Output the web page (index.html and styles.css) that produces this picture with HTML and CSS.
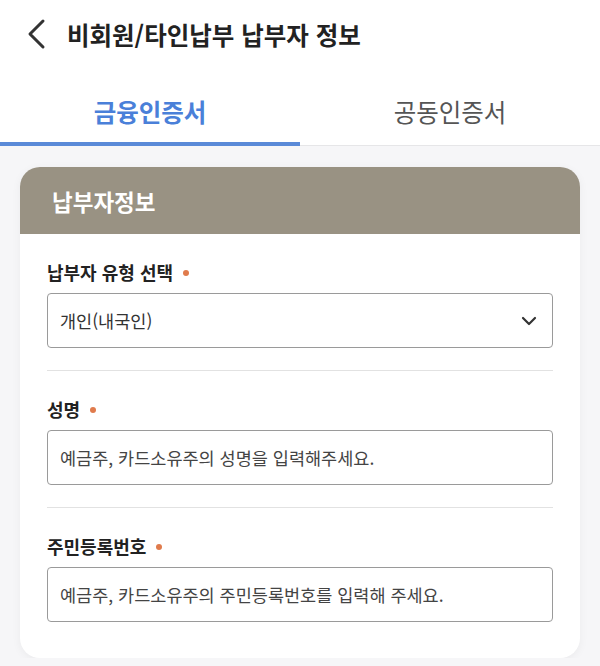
FILE: index.html
```html
<!DOCTYPE html>
<html lang="ko">
<head>
    <meta charset="UTF-8">
    <meta name="viewport" content="width=device-width, initial-scale=1.0">
    <title>비회원/타인납부 납부자 정보</title>
    <link rel="stylesheet" href="styles.css">
</head>
<body>
    <div class="top">
        <div class="header">
            <svg class="back" width="22" height="32" viewBox="0 0 22 32">
                <polyline points="17,3 4,16 17,29" fill="none" stroke="#333" stroke-width="3" stroke-linecap="round" stroke-linejoin="round"/>
            </svg>
            <h1 class="title">비회원/타인납부 납부자 정보</h1>
        </div>
        <div class="tabs">
            <div class="tab active">금융인증서</div>
            <div class="tab">공동인증서</div>
        </div>
    </div>

    <div class="content">
        <div class="card">
            <div class="card-head">납부자정보</div>
            <div class="card-body">
                <div class="field">
                    <div class="label">납부자 유형 선택<span class="req"></span></div>
                    <div class="select">
                        <span>개인(내국인)</span>
                        <svg width="16" height="10" viewBox="0 0 16 10">
                            <polyline points="2,2 8,8 14,2" fill="none" stroke="#333" stroke-width="2.2" stroke-linecap="round" stroke-linejoin="round"/>
                        </svg>
                    </div>
                </div>
                <div class="field">
                    <div class="label">성명<span class="req"></span></div>
                    <input class="input" type="text" placeholder="예금주, 카드소유주의 성명을 입력해주세요.">
                </div>
                <div class="field">
                    <div class="label">주민등록번호<span class="req"></span></div>
                    <input class="input" type="text" placeholder="예금주, 카드소유주의 주민등록번호를 입력해 주세요.">
                </div>
            </div>
        </div>
    </div>
</body>
</html>
```

FILE: styles.css
```css
* {
    box-sizing: border-box;
}
body {
    margin: 0;
    font-family: "Noto Sans CJK KR", "Noto Sans", sans-serif;
    background-color: #f6f6f8;
    color: #222;
}
.top {
    background: #fff;
}
.header {
    height: 68px;
    display: flex;
    align-items: center;
    padding-left: 26px;
    gap: 19px;
}
.title {
    margin: 0;
    font-size: 24.5px;
    font-weight: bold;
    color: #222;
}
.tabs {
    display: flex;
    height: 78px;
    box-shadow: inset 0 -1px 0 #e6e6e8;
}
.tab {
    flex: 1;
    display: flex;
    justify-content: center;
    align-items: center;
    padding-top: 12px;
    font-size: 24.5px;
    color: #555;
    border-bottom: 4px solid transparent;
}
.tab.active {
    color: #4a80d9;
    font-weight: bold;
    border-bottom-color: #5a8ad8;
}
.content {
    padding: 21px 20px 0;
}
.card {
    background: #fff;
    border-radius: 20px;
    overflow: hidden;
    box-shadow: 0 2px 10px rgba(0,0,0,0.05);
}
.card-head {
    height: 67px;
    display: flex;
    align-items: center;
    padding-left: 32px;
    background-color: #999283;
    color: #fff;
    font-size: 22.5px;
    font-weight: bold;
}
.card-body {
    padding: 0 27px 14px;
}
.field {
    padding: 26px 0 22px;
    border-bottom: 1px solid #e2e2e2;
}
.field:last-child {
    border-bottom: none;
}
.label {
    display: flex;
    align-items: center;
    line-height: 24px;
    font-size: 18px;
    font-weight: bold;
    color: #222;
    margin-bottom: 9px;
}
.req {
    width: 6px;
    height: 6px;
    border-radius: 50%;
    background-color: #e07b4c;
    margin-left: 10px;
    margin-top: 2px;
}
.select,
.input {
    display: flex;
    align-items: center;
    width: 100%;
    height: 55px;
    border: 1px solid #9a9a9a;
    border-radius: 4px;
    padding: 0 12px;
    font-family: inherit;
    font-size: 17.5px;
    color: #333;
    background: #fff;
}
.select {
    justify-content: space-between;
    padding-right: 15px;
}
.input::placeholder {
    color: #444;
}
```
